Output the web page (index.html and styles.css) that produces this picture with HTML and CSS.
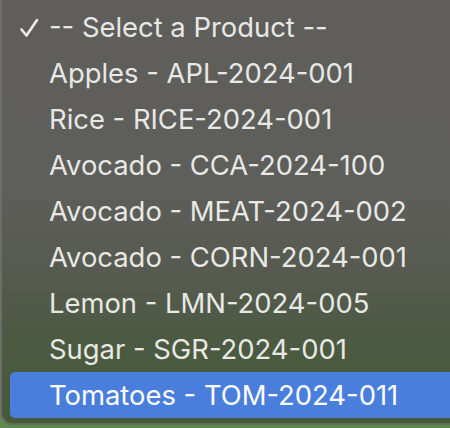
FILE: index.html
```html
<!DOCTYPE html>
<html>
<head>
<meta charset="utf-8">
<link rel="stylesheet" href="styles.css">
</head>
<body>
<div class="menu">
  <ul class="list">
    <li class="item checked"><svg class="check" width="22" height="22" viewBox="0 0 22 22"><path d="M2.5 12.5 L7.5 18.5 L18 3" fill="none" stroke="#ececea" stroke-width="2.6" stroke-linecap="round" stroke-linejoin="round"/></svg><span class="label">-- Select a Product --</span></li>
    <li class="item"><span class="label">Apples - APL-2024-001</span></li>
    <li class="item"><span class="label">Rice - RICE-2024-001</span></li>
    <li class="item"><span class="label">Avocado - CCA-2024-100</span></li>
    <li class="item"><span class="label">Avocado - MEAT-2024-002</span></li>
    <li class="item"><span class="label">Avocado - CORN-2024-001</span></li>
    <li class="item"><span class="label">Lemon - LMN-2024-005</span></li>
    <li class="item"><span class="label">Sugar - SGR-2024-001</span></li>
    <li class="item active"><span class="label">Tomatoes - TOM-2024-011</span></li>
  </ul>
</div>
</body>
</html>
```
FILE: styles.css
```css
html, body {
  margin: 0;
  padding: 0;
  width: 450px;
  height: 428px;
  overflow: hidden;
  background: #5d8a4c;
}
.menu {
  width: 470px;
  height: 425px;
  box-sizing: border-box;
  border-left: 2px solid #6d6d6a;
  border-bottom: 2px solid #5f6e55;
  border-bottom-left-radius: 12px;
  background: linear-gradient(180deg, #5f5e5b 0%, #5e5e5a 45%, #565a4f 65%, #4b5a40 82%, #465a38 100%);
  padding: 4px 0 0 8px;
  font-family: Inter, "Noto Sans", sans-serif;
}
.list {
  list-style: none;
  margin: 0;
  padding: 0;
}
.item {
  position: relative;
  height: 46px;
  display: flex;
  align-items: center;
  padding-left: 39px;
  font-size: 27.4px;
  color: #e8e8e6;
  border-radius: 5px 0 0 5px;
}
.check {
  position: absolute;
  left: 9px;
  top: 13px;
}
.active {
  background: #4a7edd;
  color: #ffffff;
}
```
